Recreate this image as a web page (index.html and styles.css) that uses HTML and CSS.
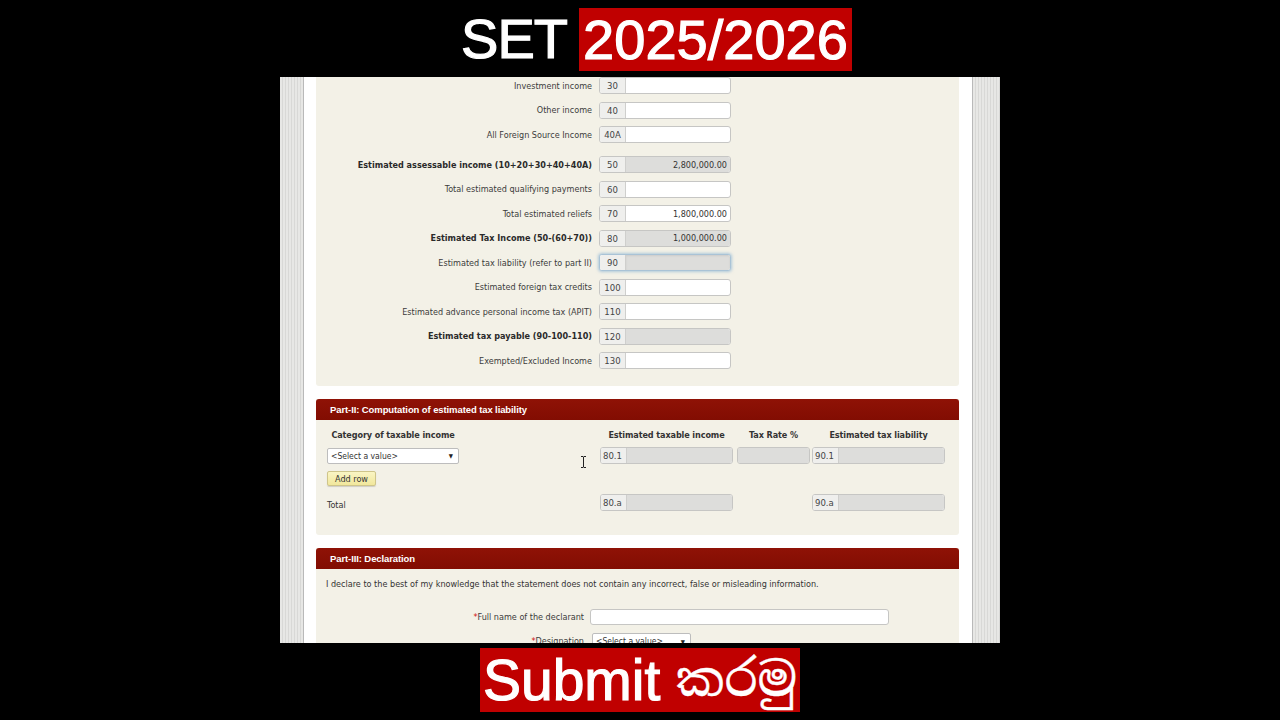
FILE: index.html
```html
<!DOCTYPE html>
<html lang="en">
<head>
<meta charset="utf-8">
<title>SET 2025/2026</title>
<link rel="stylesheet" href="styles.css">
</head>
<body>
<div class="frame">
  <header class="top-banner">
    <span class="set">SET</span>
    <span class="year">2025/2026</span>
  </header>

  <main class="viewport">
    <div class="gutter gutter-left"></div>
    <div class="page">
      <section class="panel part1">
        <div class="field-row"><span class="lbl">Investment income</span><div class="ig"><span class="pre">30</span><span class="inp"></span></div></div>
        <div class="field-row"><span class="lbl">Other income</span><div class="ig"><span class="pre">40</span><span class="inp"></span></div></div>
        <div class="field-row group-end"><span class="lbl">All Foreign Source Income</span><div class="ig"><span class="pre">40A</span><span class="inp"></span></div></div>
        <div class="field-row"><span class="lbl bold">Estimated assessable income (10+20+30+40+40A)</span><div class="ig"><span class="pre">50</span><span class="inp ro">2,800,000.00</span></div></div>
        <div class="field-row"><span class="lbl">Total estimated qualifying payments</span><div class="ig"><span class="pre">60</span><span class="inp"></span></div></div>
        <div class="field-row"><span class="lbl">Total estimated reliefs</span><div class="ig"><span class="pre">70</span><span class="inp">1,800,000.00</span></div></div>
        <div class="field-row"><span class="lbl bold">Estimated Tax Income (50-(60+70))</span><div class="ig"><span class="pre">80</span><span class="inp ro">1,000,000.00</span></div></div>
        <div class="field-row"><span class="lbl">Estimated tax liability (refer to part II)</span><div class="ig focus"><span class="pre">90</span><span class="inp ro"></span></div></div>
        <div class="field-row"><span class="lbl">Estimated foreign tax credits</span><div class="ig"><span class="pre">100</span><span class="inp"></span></div></div>
        <div class="field-row"><span class="lbl">Estimated advance personal income tax (APIT)</span><div class="ig"><span class="pre">110</span><span class="inp"></span></div></div>
        <div class="field-row"><span class="lbl bold">Estimated tax payable (90-100-110)</span><div class="ig"><span class="pre">120</span><span class="inp ro"></span></div></div>
        <div class="field-row"><span class="lbl">Exempted/Excluded Income</span><div class="ig"><span class="pre">130</span><span class="inp"></span></div></div>
      </section>

      <section class="panel part2">
        <div class="panel-head">Part-II: Computation of estimated tax liability</div>
        <div class="panel-body comp-grid">
          <span class="col-head c1">Category of taxable income</span>
          <span class="col-head c3">Estimated taxable income</span>
          <span class="col-head c4">Tax Rate %</span>
          <span class="col-head c5">Estimated tax liability</span>

          <div class="select c1"><span>&lt;Select a value&gt;</span><span class="arrow">&#9660;</span></div>
          <div class="ig wide c3"><span class="pre">80.1</span><span class="inp ro"></span></div>
          <div class="ig rate c4"><span class="inp ro"></span></div>
          <div class="ig wide c5"><span class="pre">90.1</span><span class="inp ro"></span></div>

          <button class="add-row c1" type="button">Add row</button>

          <span class="total-lbl c1">Total</span>
          <div class="ig wide c3 total-in"><span class="pre">80.a</span><span class="inp ro"></span></div>
          <div class="ig wide c5 total-in"><span class="pre">90.a</span><span class="inp ro"></span></div>

          <svg class="ibeam" width="7" height="12" viewBox="0 0 7 12"><path d="M1 0.5h2l.5.5.5-.5h2M3.5 1v10M1 11.5h2l.5-.5.5.5h2" fill="none" stroke="#222" stroke-width="1"/></svg>
        </div>
      </section>

      <section class="panel part3">
        <div class="panel-head">Part-III: Declaration</div>
        <div class="panel-body decl">
          <p class="decl-text">I declare to the best of my knowledge that the statement does not contain any incorrect, false or misleading information.</p>
          <div class="decl-row"><span class="lbl"><span class="req">*</span>Full name of the declarant</span><span class="text-input"></span></div>
          <div class="decl-row"><span class="lbl"><span class="req">*</span>Designation</span><div class="select small"><span>&lt;Select a value&gt;</span><span class="arrow">&#9660;</span></div></div>
        </div>
      </section>
    </div>
    <div class="gutter gutter-right"></div>
  </main>

  <footer class="bottom-banner">
    <span class="submit">Submit <span class="si">කරමු</span></span>
  </footer>
</div>
</body>
</html>
```

FILE: styles.css
```css
html, body {
  margin: 0;
  padding: 0;
  background: #000;
}
body {
  width: 1280px;
  height: 720px;
  overflow: hidden;
}
.frame {
  display: flex;
  flex-direction: column;
  height: 720px;
}

/* ---------- banners ---------- */
.top-banner {
  height: 77px;
  display: flex;
  align-items: center;
  justify-content: center;
  padding-left: 33px;
  gap: 12px;
  font-family: "Liberation Sans", Arial, sans-serif;
  color: #fff;
  font-size: 56px;
  -webkit-text-stroke: 1.2px #fff;
  box-sizing: border-box;
}
.top-banner .set {
  letter-spacing: -1px;
  line-height: 1;
}
.top-banner .year {
  background: #c00000;
  height: 63px;
  width: 273px;
  display: flex;
  align-items: center;
  justify-content: center;
  line-height: 1;
  margin-top: 2px;
}

.bottom-banner {
  flex: 1;
  display: flex;
  align-items: flex-start;
  justify-content: center;
  padding-top: 5px;
}
.submit {
  background: #c00000;
  width: 320px;
  height: 64px;
  display: flex;
  align-items: center;
  justify-content: center;
  font-family: "Liberation Sans", Arial, "Noto Sans Sinhala", "Noto Serif Sinhala", sans-serif;
  font-size: 57px;
  color: #fff;
  -webkit-text-stroke: 1.2px #fff;
  line-height: 1;
  white-space: pre;
}
.submit .si {
  font-family: "Noto Serif Sinhala", "Noto Sans Sinhala", "Iskoola Pota", sans-serif;
  font-size: 48px;
  -webkit-text-stroke: 0.4px #fff;
}

/* ---------- viewport of the screenshot ---------- */
.viewport {
  width: 720px;
  height: 566px;
  margin: 0 auto;
  display: flex;
  overflow: hidden;
  background: #fff;
  position: relative;
}
.gutter {
  background: repeating-linear-gradient(90deg, #e7e7e5 0 2px, #d8d8d6 2px 3px);
}
.gutter-left {
  width: 23px;
  border-right: 1px solid #b9b9b9;
}
.gutter-right {
  width: 27px;
  border-left: 1px solid #b9b9b9;
}
.page {
  flex: 1;
  padding: 0 13px 0 12px;
  background: #fff;
  font-family: "DejaVu Sans Condensed", "DejaVu Sans", Verdana, sans-serif;
  font-stretch: condensed;
  font-size: 9px;
  color: #333;
}
.panel {
  background: #f3f1e7;
  border-radius: 0 0 3px 3px;
}

/* ---------- part I ---------- */
.part1 {
  padding-bottom: 17px;
  display: flex;
  flex-direction: column;
  gap: 7.5px;
}
.field-row {
  display: grid;
  grid-template-columns: 276px 132px;
  column-gap: 7px;
  align-items: center;
  height: 17px;
}
.field-row.group-end {
  margin-bottom: 5.5px;
}
.lbl {
  text-align: right;
  white-space: nowrap;
  color: #3c3c3c;
}
.lbl.bold {
  font-weight: bold;
  color: #2a2a2a;
}

.ig {
  display: flex;
  height: 17px;
  box-sizing: border-box;
  border: 1px solid #c6c6c4;
  border-radius: 3px;
  background: #fff;
  overflow: hidden;
  width: 132px;
}
.ig .pre {
  width: 25px;
  flex: none;
  background: #efefed;
  border-right: 1px solid #cfcfcd;
  display: flex;
  align-items: center;
  justify-content: center;
  color: #444;
  font-size: 9.5px;
}
.ig .inp {
  flex: 1;
  display: flex;
  align-items: center;
  justify-content: flex-end;
  padding-right: 3px;
  color: #333;
  font-size: 9px;
}
.ig .inp.ro {
  background: #dddddb;
}
.ig.focus {
  border-color: #a9c3d6;
  box-shadow: 0 0 3px 1px rgba(120, 170, 210, 0.55);
}
.ig.focus .inp {
  box-shadow: inset 0 1px 2px rgba(0,0,0,0.08);
}

/* ---------- panel headers ---------- */
.part2 { margin-top: 13px; }
.part3 { margin-top: 13px; }
.panel-head {
  height: 21px;
  display: flex;
  align-items: center;
  padding-left: 14px;
  background: linear-gradient(#8f1206, #820d02);
  border-radius: 3px 3px 0 0;
  color: #fff;
  font-family: "Liberation Sans", Arial, sans-serif;
  font-weight: bold;
  font-size: 9.5px;
  letter-spacing: -0.1px;
}

/* ---------- part II ---------- */
.comp-grid {
  position: relative;
  display: grid;
  grid-template-columns: 132px 141px 137px 75px 133px;
  grid-template-rows: 12px 17px 15px 17px;
  row-gap: 7px;
  padding: 8px 14px 25px 11px;
  align-items: center;
}
.c1 { grid-column: 1; }
.c3 { grid-column: 3; }
.c4 { grid-column: 4; }
.c5 { grid-column: 5; }
.col-head {
  font-weight: bold;
  color: #333;
  text-align: center;
  white-space: nowrap;
  letter-spacing: -0.1px;
  margin-top: 1px;
}
.col-head.c1 { width: 132px; }
.col-head.c3 { width: 133px; }
.col-head.c4 { width: 73px; }
.col-head.c5 { width: 133px; }
.ig.wide { width: 133px; }
.ig.wide .pre { width: 26px; justify-content: flex-start; padding-left: 2px; box-sizing: border-box; }
.ig.rate { width: 73px; }

.select {
  height: 16px;
  box-sizing: border-box;
  width: 132px;
  border: 1px solid #bdbdbd;
  border-radius: 2px;
  background: #fff;
  display: flex;
  align-items: center;
  justify-content: space-between;
  padding: 0 5px 0 3px;
  color: #333;
  font-size: 8.5px;
}
.select .arrow {
  font-size: 6px;
  color: #222;
}
.add-row {
  justify-self: start;
  width: 49px;
  height: 15px;
  padding: 0;
  border: 1px solid #cfc58a;
  border-radius: 2px;
  background: linear-gradient(#faf5c4, #f1e79c);
  box-shadow: 0 1px 1px rgba(0,0,0,0.15);
  font-family: inherit;
  font-stretch: condensed;
  font-size: 9px;
  color: #333;
}
.total-lbl {
  grid-row: 4;
  align-self: end;
  margin-bottom: 0;
  color: #333;
}
.total-in {
  grid-row: 4;
  margin-top: 1px;
}
.ibeam {
  position: absolute;
  left: 264px;
  top: 36px;
}

/* ---------- part III ---------- */
.decl {
  padding: 9px 0 20px 0;
}
.decl-text {
  margin: 0 0 0 10px;
  height: 12px;
  line-height: 12px;
  color: #333;
  white-space: nowrap;
}
.decl-row {
  display: grid;
  grid-template-columns: 268px auto;
  column-gap: 6px;
  align-items: center;
  height: 16px;
  margin-top: 8px;
}
.decl-row:first-of-type { margin-top: 19px; }
.req { color: #d01010; }
.text-input {
  width: 299px;
  height: 16px;
  box-sizing: border-box;
  border: 1px solid #c6c6c4;
  border-radius: 3px;
  background: #fff;
}
.select.small {
  width: 99px;
  margin-left: 2px;
}
```
